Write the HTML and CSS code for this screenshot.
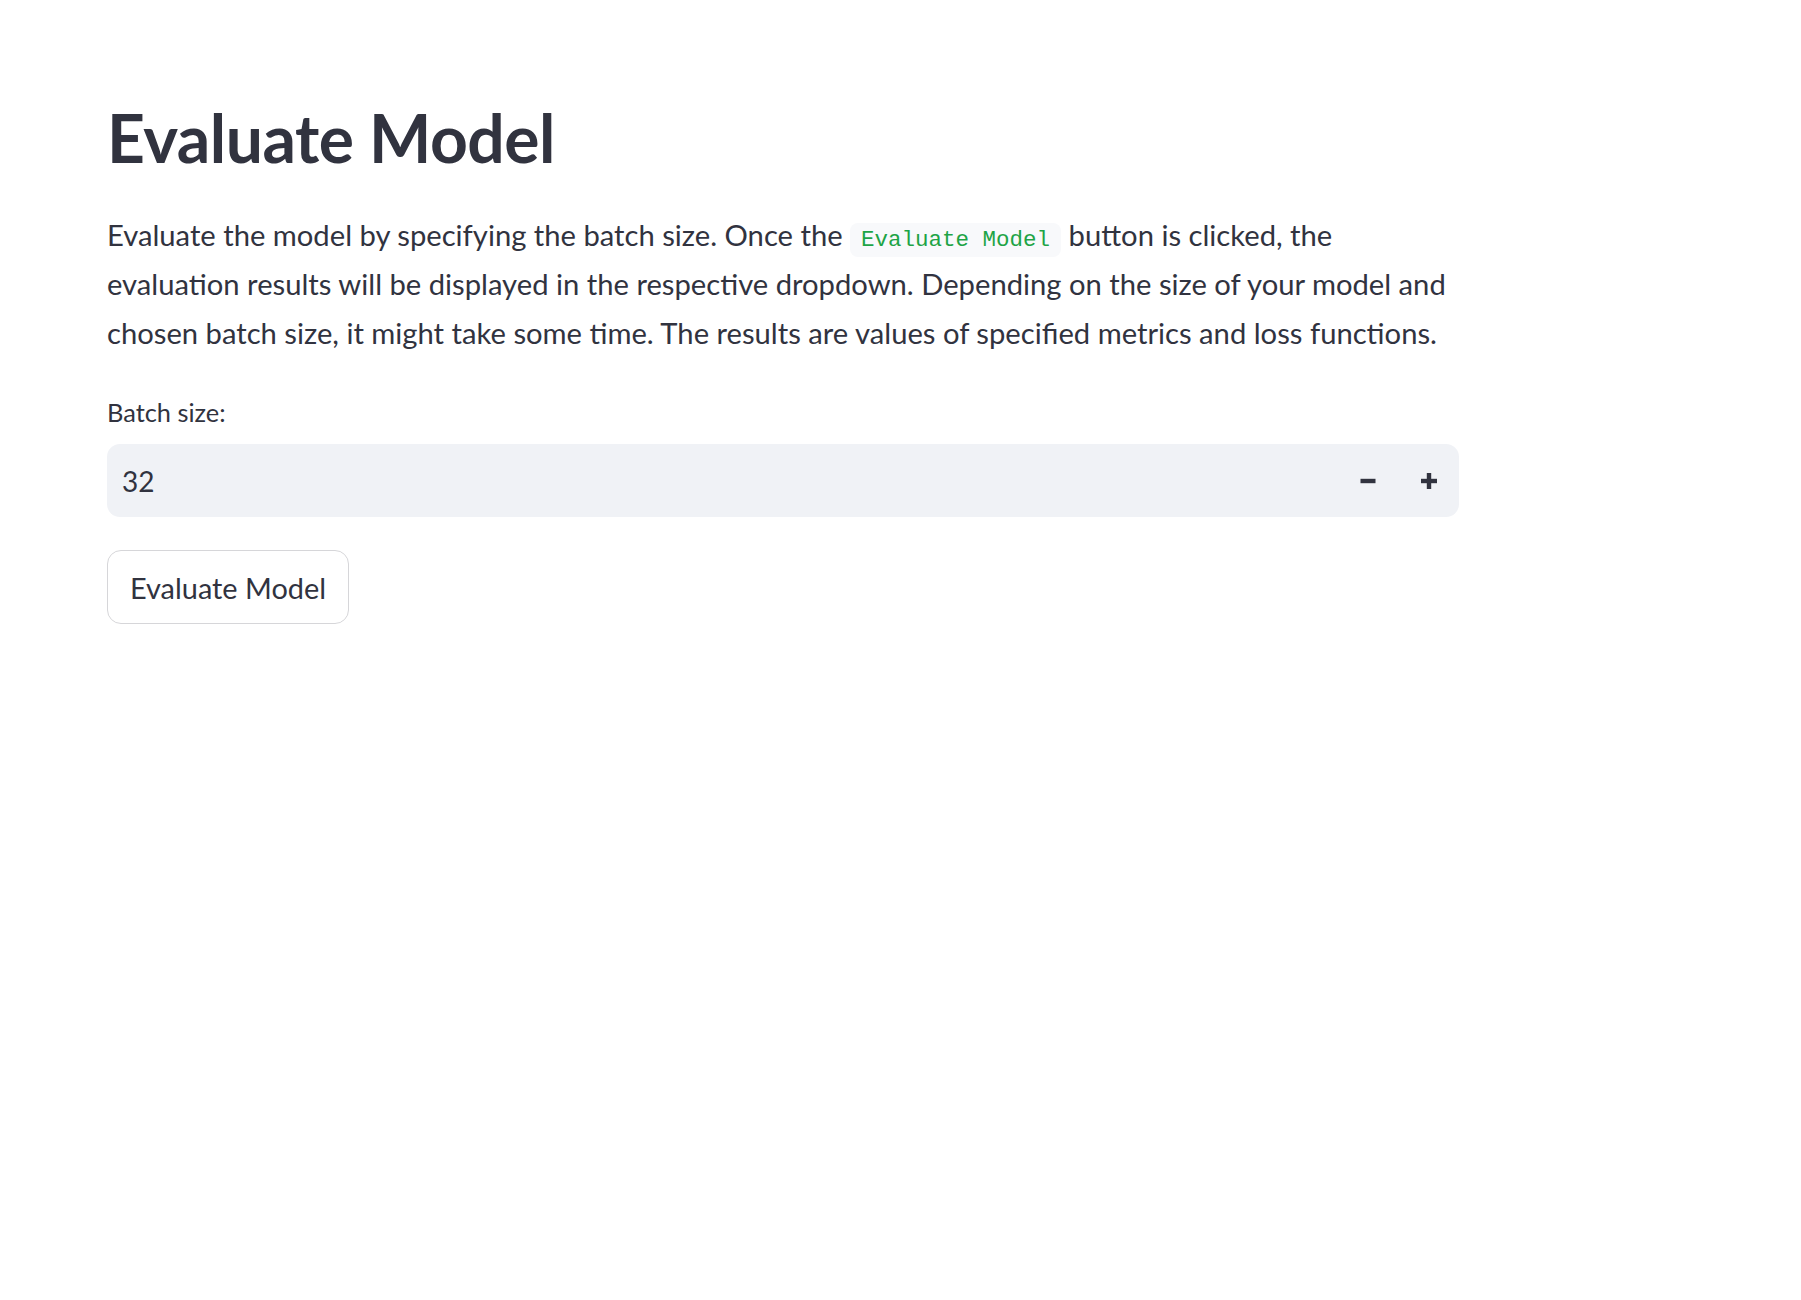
FILE: index.html
```html
<!DOCTYPE html>
<html lang="en">
<head>
<meta charset="utf-8">
<title>Evaluate Model</title>
<link rel="stylesheet" href="styles.css">
</head>
<body>
<main class="main">
  <h1 class="title">Evaluate Model</h1>
  <p class="desc">Evaluate the model by specifying the batch size. Once the <code class="code">Evaluate Model</code> button is clicked, the evaluation results will be displayed in the respective dropdown. Depending on the size of your model and chosen batch size, it might take some time. The results are values of specified metrics and loss functions.</p>
  <div class="field">
    <label class="label">Batch size:</label>
    <div class="num-input">
      <span class="num-value">32</span>
      <div class="steps">
        <button class="step" aria-label="minus">
          <svg width="16" height="16" viewBox="0 0 16 16"><rect x="0.5" y="5.8" width="15" height="4.4" fill="#31333f"/></svg>
        </button>
        <button class="step" aria-label="plus">
          <svg width="16" height="16" viewBox="0 0 16 16"><rect x="0" y="5.8" width="16" height="4.4" fill="#31333f"/><rect x="5.8" y="0" width="4.4" height="16" fill="#31333f"/></svg>
        </button>
      </div>
    </div>
  </div>
  <button class="btn">Evaluate Model</button>
</main>
</body>
</html>
```

FILE: styles.css
```css
html, body {
  margin: 0;
  padding: 0;
  background: #ffffff;
}
body {
  font-family: "Lato", "Noto Sans", sans-serif;
  color: #31333f;
}
.main {
  width: 1352px;
  padding: 98px 0 0 107px;
}
.title {
  margin: 0;
  font-size: 66px;
  font-weight: 700;
  line-height: 1.2;
  letter-spacing: -0.5px;
}
.desc {
  margin: 33px 0 0 0;
  font-size: 29.2px;
  line-height: 49px;
}
.code {
  font-family: "Liberation Mono", "DejaVu Sans Mono", monospace;
  font-size: 22.5px;
  line-height: 1;
  color: #1ea446;
  background: #f8f9fb;
  border-radius: 8px;
  padding: 4px 11px;
}
.field {
  margin-top: 37px;
}
.label {
  display: block;
  font-size: 25.4px;
  line-height: 36px;
  margin-bottom: 14px;
}
.num-input {
  display: flex;
  align-items: center;
  height: 73px;
  background: #f0f2f6;
  border-radius: 13px;
  padding: 0 0 0 15px;
}
.num-value {
  flex: 1;
  font-size: 28px;
}
.steps {
  display: flex;
  height: 100%;
}
.step {
  width: 61px;
  height: 100%;
  border: none;
  background: transparent;
  display: flex;
  align-items: center;
  justify-content: center;
  padding: 0;
}
.btn {
  margin-top: 33px;
  height: 74px;
  padding: 0 22px;
  font-family: "Lato", "Noto Sans", sans-serif;
  font-size: 28.9px;
  color: #31333f;
  background: #ffffff;
  border: 1px solid #d6d6d9;
  border-radius: 14px;
}
```
